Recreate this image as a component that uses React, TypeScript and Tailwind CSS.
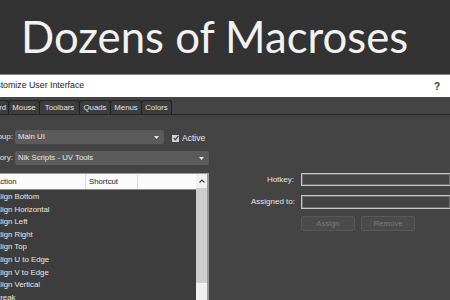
import React from "react";

const tabs = [
  { label: "Keyboard", w: "w-[39px]", ml: "-ml-[30px]" },
  { label: "Mouse", w: "w-[32px]", ml: "-ml-px" },
  { label: "Toolbars", w: "w-[41px]", ml: "-ml-px" },
  { label: "Quads", w: "w-[32px]", ml: "-ml-px" },
  { label: "Menus", w: "w-[32px]", ml: "-ml-px" },
  { label: "Colors", w: "w-[31px]", ml: "-ml-px" },
];

const actions = [
  "Align Bottom",
  "Align Horizontal",
  "Align Left",
  "Align Right",
  "Align Top",
  "Align U to Edge",
  "Align V to Edge",
  "Align Vertical",
  "Break",
];

function Arrow() {
  return (
    <svg width="5" height="3" viewBox="0 0 5 3" className="shrink-0">
      <path d="M0 0h5L2.5 3z" fill="#e8e8e8" />
    </svg>
  );
}

export default function App() {
  return (
    <div className="flex h-[300px] w-[450px] flex-col overflow-hidden bg-[#444444] font-['Liberation_Sans',sans-serif]">
      <div className="flex h-[74px] shrink-0 items-center bg-[#333333] pl-[21px]">
        <h1 className="font-['Lato',sans-serif] text-[43.7px] leading-none text-[#f2f2f2]">
          Dozens of Macroses
        </h1>
      </div>
      <div className="h-px shrink-0 bg-[#858585]" />

      {/* dialog title bar */}
      <div className="flex h-[22px] shrink-0 items-center justify-between bg-white pr-[10px]">
        <span className="-ml-[15px] whitespace-nowrap text-[8.8px] text-[#1a1a1a]">
          Customize User Interface
        </span>
        <span className="text-[10px] font-bold text-[#333]">?</span>
      </div>

      {/* tabs */}
      <div className="flex h-[18px] shrink-0 items-end border-b border-[#262626] bg-[#454545]">
        {tabs.map((t) => (
          <div
            key={t.label}
            className={`${t.w} ${t.ml} flex h-[14px] items-center justify-center rounded-t-[3px] border border-b-0 border-[#1f1f1f] bg-[#3d3d3d] text-[7.8px] text-[#e4e4e4]`}
          >
            {t.label}
          </div>
        ))}
      </div>

      <div className="flex flex-1">
        {/* left column */}
        <div className="flex w-[209px] shrink-0 flex-col pt-[15px]">
          <div className="flex h-[14px] items-center">
            <span className="-ml-[30px] w-[43px] whitespace-nowrap text-right text-[8px] text-[#e0e0e0]">
              Group:
            </span>
            <div className="ml-[2px] flex h-[14px] w-[149px] items-center justify-between rounded-[2px] bg-[#5b5b5b] pl-[3px] pr-[5px] text-[7.8px] text-[#e6e6e6]">
              Main UI
              <Arrow />
            </div>
            <div className="ml-[8px] mt-[2px] flex items-center gap-[3px]">
              <span className="flex h-[7px] w-[7px] items-center justify-center bg-[#cfcfcf]">
                <svg width="6" height="6" viewBox="0 0 6 6">
                  <path d="M0.8 3.2 2.3 4.7 5.3 1.2" fill="none" stroke="#333" strokeWidth="1.1" />
                </svg>
              </span>
              <span className="text-[8.5px] text-[#ececec]">Active</span>
            </div>
          </div>
          <div className="mt-[7px] flex h-[14px] items-center">
            <span className="-ml-[30px] w-[43px] whitespace-nowrap text-right text-[8px] text-[#e0e0e0]">
              Category:
            </span>
            <div className="ml-[2px] flex h-[14px] w-[194px] items-center justify-between rounded-[2px] bg-[#5b5b5b] pl-[3px] pr-[5px] text-[7.8px] text-[#e6e6e6]">
              Nik Scripts - UV Tools
              <Arrow />
            </div>
          </div>

          {/* action list */}
          <div className="-ml-[12px] mt-[8px] flex w-[221px] flex-1 border border-r-[2px] border-[#9a9a9a] bg-[#3d3d3d]">
            <div className="flex flex-1 flex-col">
              <div className="flex h-[16px] items-center border-b border-[#8a8a8a] bg-[#fbfbfb] text-[7.8px] text-[#222]">
                <div className="flex h-full w-[97px] items-center border-r border-[#dcdcdc] pl-[6px]">
                  Action
                </div>
                <div className="flex h-full w-[52px] items-center border-r border-[#dcdcdc] pl-[3px]">
                  Shortcut
                </div>
              </div>
              <div className="flex flex-col pt-px">
                {actions.map((a) => (
                  <div
                    key={a}
                    className="h-[12.6px] whitespace-nowrap pl-[6px] text-[7.8px] leading-[12.6px] text-[#e8e8e8]"
                  >
                    {a}
                  </div>
                ))}
              </div>
            </div>
            <div className="flex w-[11px] flex-col bg-[#f0f0f0]">
              <div className="flex h-[14px] items-center justify-center">
                <svg width="6" height="4" viewBox="0 0 6 4">
                  <path d="M0.5 3.5 3 1 5.5 3.5" fill="none" stroke="#444" strokeWidth="1.2" />
                </svg>
              </div>
              <div className="h-[95px] bg-[#cdcdcd]" />
            </div>
          </div>
        </div>

        {/* right column */}
        <div className="ml-[21px] flex flex-1 flex-col pt-[58px]">
          <div className="flex h-[13px] items-center">
            <span className="w-[65px] pr-px text-right text-[8px] text-[#e6e6e6]">Hotkey:</span>
            <div className="ml-[6px] h-full flex-1 border border-r-0 border-[#c6c6c6] shadow-[inset_0_0_0_1px_#6e6e6e]" />
          </div>
          <div className="mt-[9px] flex h-[14px] items-center">
            <span className="w-[65px] whitespace-nowrap text-right text-[8px] text-[#e6e6e6]">
              Assigned to:
            </span>
            <div className="ml-[6px] h-full flex-1 border border-r-0 border-[#c6c6c6] shadow-[inset_0_0_0_1px_#6e6e6e]" />
          </div>
          <div className="ml-[71px] mt-[7px] flex gap-[6px]">
            <div className="flex h-[15px] w-[54px] items-center justify-center rounded-[2px] border border-[#585858] bg-[#4b4b4b] text-[7.8px] text-[#7c7c7c]">
              Assign
            </div>
            <div className="flex h-[15px] w-[54px] items-center justify-center rounded-[2px] border border-[#585858] bg-[#4b4b4b] text-[7.8px] text-[#7c7c7c]">
              Remove
            </div>
          </div>
        </div>
      </div>
    </div>
  );
}
